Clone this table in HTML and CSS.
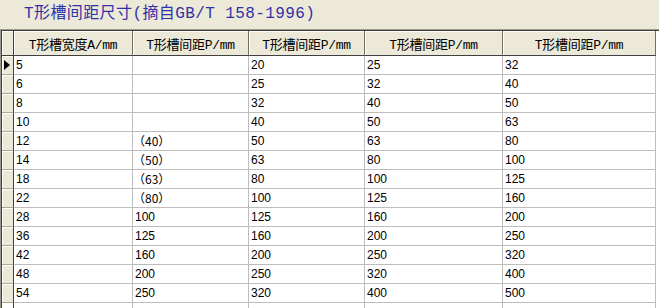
FILE: index.html
```html
<!DOCTYPE html>
<html lang="zh-CN">
<head>
<meta charset="utf-8">
<title>T形槽间距尺寸</title>
<link rel="stylesheet" href="styles.css">
</head>
<body>
<div class="title">T形槽间距尺寸(摘自GB/T 158-1996)</div>
<div class="grid-frame">
  <div class="grid">
    <div class="hc corner"></div>
    <div class="hc">T形槽宽度A/mm</div>
    <div class="hc">T形槽间距P/mm</div>
    <div class="hc">T形槽间距P/mm</div>
    <div class="hc">T形槽间距P/mm</div>
    <div class="hc">T形槽间距P/mm</div>

    <div class="rh current"><span class="arrow"></span></div><div class="c">5</div><div class="c"></div><div class="c">20</div><div class="c">25</div><div class="c">32</div>
    <div class="rh"></div><div class="c">6</div><div class="c"></div><div class="c">25</div><div class="c">32</div><div class="c">40</div>
    <div class="rh"></div><div class="c">8</div><div class="c"></div><div class="c">32</div><div class="c">40</div><div class="c">50</div>
    <div class="rh"></div><div class="c">10</div><div class="c"></div><div class="c">40</div><div class="c">50</div><div class="c">63</div>
    <div class="rh"></div><div class="c">12</div><div class="c cjk">（40）</div><div class="c">50</div><div class="c">63</div><div class="c">80</div>
    <div class="rh"></div><div class="c">14</div><div class="c cjk">（50）</div><div class="c">63</div><div class="c">80</div><div class="c">100</div>
    <div class="rh"></div><div class="c">18</div><div class="c cjk">（63）</div><div class="c">80</div><div class="c">100</div><div class="c">125</div>
    <div class="rh"></div><div class="c">22</div><div class="c cjk">（80）</div><div class="c">100</div><div class="c">125</div><div class="c">160</div>
    <div class="rh"></div><div class="c">28</div><div class="c">100</div><div class="c">125</div><div class="c">160</div><div class="c">200</div>
    <div class="rh"></div><div class="c">36</div><div class="c">125</div><div class="c">160</div><div class="c">200</div><div class="c">250</div>
    <div class="rh"></div><div class="c">42</div><div class="c">160</div><div class="c">200</div><div class="c">250</div><div class="c">320</div>
    <div class="rh"></div><div class="c">48</div><div class="c">200</div><div class="c">250</div><div class="c">320</div><div class="c">400</div>
    <div class="rh"></div><div class="c">54</div><div class="c">250</div><div class="c">320</div><div class="c">400</div><div class="c">500</div>

    <div class="rh filler"></div><div class="c filler"></div><div class="c filler"></div><div class="c filler"></div><div class="c filler"></div><div class="c filler"></div>
  </div>
</div>
</body>
</html>
```

FILE: styles.css
```css
html, body {
  margin: 0;
  padding: 0;
  background: #ECE9D8;
  width: 659px;
  height: 308px;
  overflow: hidden;
}

.title {
  height: 29px;
  box-sizing: border-box;
  padding-left: 24px;
  padding-top: 4px;
  font-family: "Liberation Mono", "Noto Sans CJK SC", monospace;
  font-size: 16px;
  line-height: 20px;
  letter-spacing: 0.4px;
  color: #3232A8;
  white-space: nowrap;
}

.grid-frame {
  height: 279px;
  box-sizing: border-box;
  border-top: 1px solid #9D9A8C;
  border-left: 1px solid #9D9A8C;
  background: #FFFFFF;
  overflow: hidden;
}

.grid {
  display: grid;
  grid-template-columns: 12px 119px 116px 116px 138px 153px;
  grid-template-rows: 25px repeat(13, 19px) 20px;
  border-top: 1px solid #404040;
  border-left: 1px solid #404040;
  background: #FFFFFF;
}

.hc {
  box-sizing: border-box;
  background: #ECE9D8;
  border-right: 1px solid #716F64;
  border-bottom: 1px solid #404040;
  box-shadow: inset 1px 1px 0 #FFFFFF;
  font-family: "Liberation Mono", "Noto Sans CJK SC", monospace;
  font-size: 13px;
  color: #000000;
  display: flex;
  align-items: center;
  justify-content: center;
  white-space: nowrap;
  letter-spacing: -0.3px;
}

.corner {
  border-right: 1px solid #404040;
}

.rh {
  box-sizing: border-box;
  background: #ECE9D8;
  border-right: 1px solid #404040;
  border-bottom: 1px solid #ACA899;
  box-shadow: inset 1px 1px 0 #FFFFFF;
  display: flex;
  align-items: center;
  justify-content: center;
}

.arrow {
  width: 0;
  height: 0;
  border-left: 6px solid #000000;
  border-top: 5px solid transparent;
  border-bottom: 5px solid transparent;
  margin-right: 1px;
}

.c {
  box-sizing: border-box;
  border-right: 1px solid #BDBDBD;
  border-bottom: 1px solid #BDBDBD;
  padding-left: 2px;
  font-family: "Liberation Sans", "Noto Sans CJK SC", sans-serif;
  font-size: 12px;
  line-height: 18px;
  color: #000000;
  white-space: nowrap;
}

.cjk {
  font-family: "Noto Sans CJK SC", sans-serif;
  font-size: 12px;
  padding-left: 0;
}

.filler {
  border-bottom: none;
}

.rh.filler {
  background: #FFFFFF;
  box-shadow: none;
  border-right: 1px solid #404040;
}
```
